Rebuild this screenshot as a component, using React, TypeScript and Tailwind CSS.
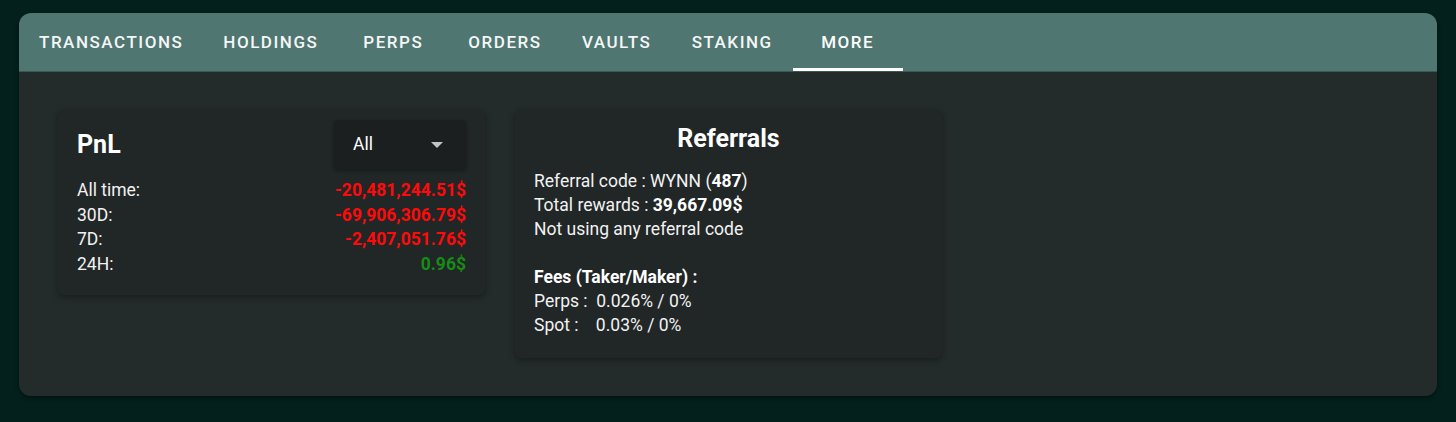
import React from "react";

const tabs = ["Transactions", "Holdings", "Perps", "Orders", "Vaults", "Staking", "More"];

const pnlRows = [
  { label: "All time:", value: "-20,481,244.51$", positive: false },
  { label: "30D:", value: "-69,906,306.79$", positive: false },
  { label: "7D:", value: "-2,407,051.76$", positive: false },
  { label: "24H:", value: "0.96$", positive: true },
];

const PnlCard: React.FC = () => (
  <div className="w-[427px] rounded-md bg-[#212626] px-[19px] pt-[10px] pb-[19px] shadow-[0_2px_6px_rgba(0,0,0,0.35)]">
    <div className="flex items-center justify-between">
      <h2 className="text-[25px] leading-[32px] font-bold text-white">PnL</h2>
      <div className="flex h-[49px] w-[132px] items-center justify-between rounded bg-[#1c1f1f] pl-[19px] pr-[23px] shadow-[0_2px_4px_rgba(0,0,0,0.3)]">
        <span className="text-[17.5px] text-white">All</span>
        <svg width="12" height="6" viewBox="0 0 12 6" className="fill-[#c4c4c4]">
          <path d="M0 0 L12 0 L6 6 Z" />
        </svg>
      </div>
    </div>
    <div className="mt-[9px]">
      {pnlRows.map((row) => (
        <div key={row.label} className="flex justify-between text-[17.5px] leading-[24.5px]">
          <span className="text-[#f2f2f2]">{row.label}</span>
          <span className={row.positive ? "font-bold text-[#178c17]" : "font-bold text-[#ff0a0a]"}>
            {row.value}
          </span>
        </div>
      ))}
    </div>
  </div>
);

const ReferralsCard: React.FC = () => (
  <div className="w-[427px] rounded-md bg-[#212626] px-[19px] pt-[13px] pb-[21px] shadow-[0_2px_6px_rgba(0,0,0,0.35)]">
    <h2 className="mb-[14px] text-center text-[25px] leading-[32px] font-bold text-white">Referrals</h2>
    <div className="text-[17.5px] leading-[24px] text-[#f2f2f2]">
      <div>
        Referral code : WYNN (<span className="font-bold text-white">487</span>)
      </div>
      <div>
        Total rewards : <span className="font-bold text-white">39,667.09$</span>
      </div>
      <div>Not using any referral code</div>
      <div className="h-[24px]" />
      <div className="font-bold text-white">Fees (Taker/Maker) :</div>
      <div className="whitespace-pre">Perps :  0.026% / 0%</div>
      <div className="whitespace-pre">Spot :    0.03% / 0%</div>
    </div>
  </div>
);

export default function App() {
  return (
    <div className="min-h-[422px] bg-[#03201d] px-[19px] pt-[13px] font-['Roboto',sans-serif]">
      <div className="overflow-hidden rounded-xl shadow-[0_2px_4px_rgba(0,0,0,0.4)]">
        <div className="flex h-[59px] border-b border-[#3b5a55] bg-[#4f7670]">
          {tabs.map((tab) => (
            <div
              key={tab}
              className={
                tab === "More"
                  ? "relative flex min-w-[110px] items-center justify-center px-5 pt-[2px] text-[17px] font-medium tracking-[0.09em] text-white uppercase"
                  : "flex min-w-[110px] items-center justify-center px-5 pt-[2px] text-[17px] font-medium tracking-[0.09em] text-[#f4f7f6] uppercase"
              }
            >
              {tab}
              {tab === "More" && <span className="absolute right-0 bottom-0 left-0 h-[3px] bg-white" />}
            </div>
          ))}
        </div>
        <div className="flex h-[324px] items-start gap-[30px] bg-[#242b2b] pt-[38px] pl-[39px]">
          <PnlCard />
          <ReferralsCard />
        </div>
      </div>
    </div>
  );
}
